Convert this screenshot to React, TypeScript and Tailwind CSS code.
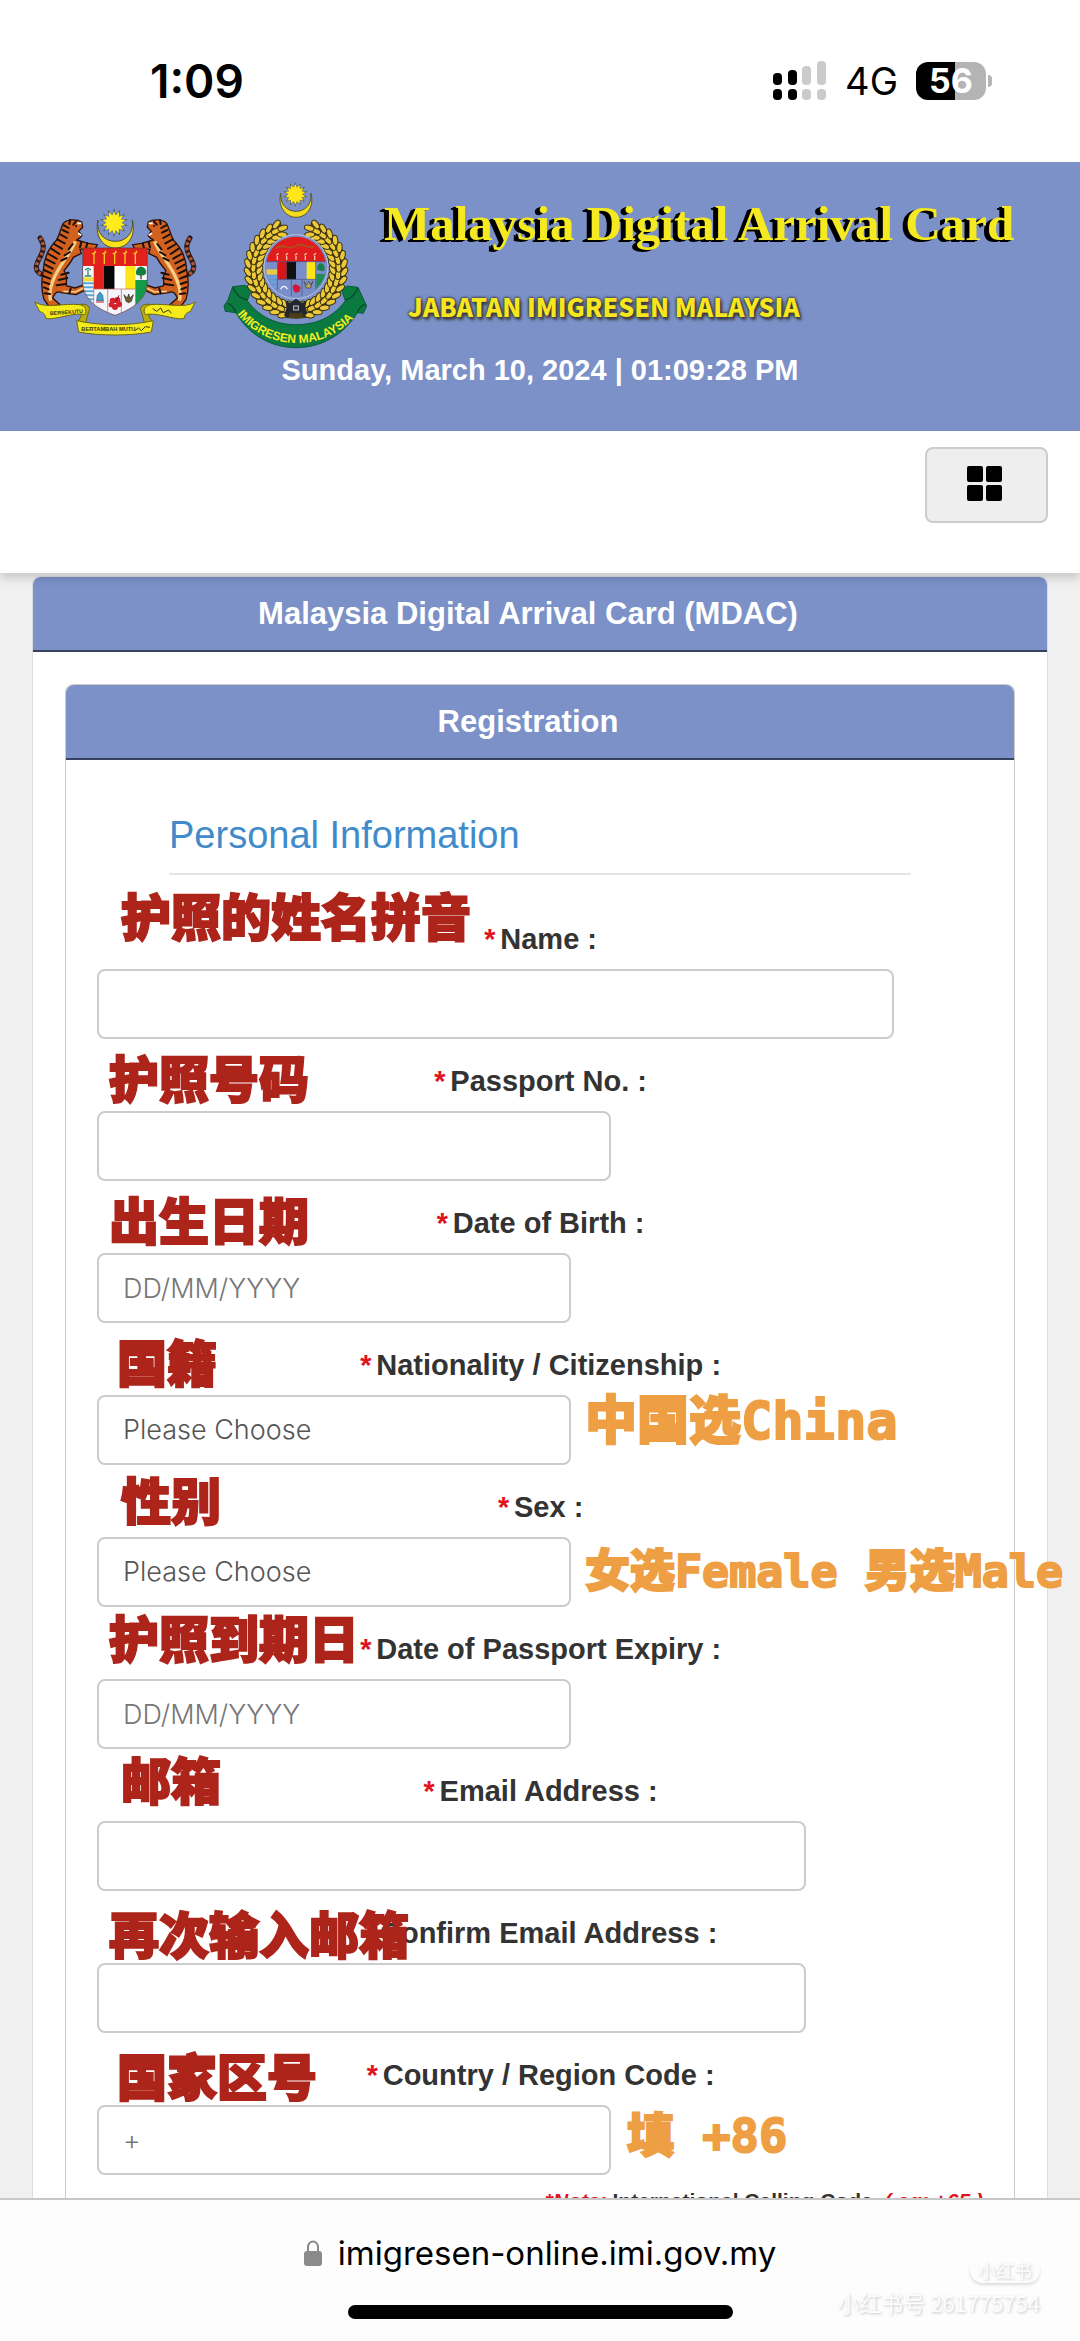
import React from 'react';

const SANS = "font-['Liberation_Sans',Arial,sans-serif]";

type Field = {
  id: string;
  label: string;
  width: string;
  kind: 'input' | 'select';
  placeholder?: string;
  note: string;
  notePos: string;
  hint?: string;
  hintPos?: string;
};

const fields: Field[] = [
  { id: 'name', label: 'Name :', width: 'w-[90%]', kind: 'input', note: '护照的姓名拼音', notePos: 'left-6 -top-2' },
  { id: 'passport', label: 'Passport No. :', width: 'w-[58%]', kind: 'input', note: '护照号码', notePos: 'left-3 top-3' },
  { id: 'dob', label: 'Date of Birth :', width: 'w-[474px]', kind: 'input', placeholder: 'DD/MM/YYYY', note: '出生日期', notePos: 'left-3 top-3' },
  { id: 'nationality', label: 'Nationality / Citizenship :', width: 'w-[474px]', kind: 'select', placeholder: 'Please Choose', note: '国籍', notePos: 'left-5 top-3', hint: '中国选China', hintPos: 'left-[488px] top-[73px] text-[52px]' },
  { id: 'sex', label: 'Sex :', width: 'w-[474px]', kind: 'select', placeholder: 'Please Choose', note: '性别', notePos: 'left-6 top-2', hint: '女选Female 男选Male', hintPos: 'left-[488px] top-[82px] text-[45px]' },
  { id: 'expiry', label: 'Date of Passport Expiry :', width: 'w-[474px]', kind: 'input', placeholder: 'DD/MM/YYYY', note: '护照到期日', notePos: 'left-3 top-1' },
  { id: 'email', label: 'Email Address :', width: 'w-[80%]', kind: 'input', note: '邮箱', notePos: 'left-6 top-1' },
  { id: 'confirm', label: 'Confirm Email Address :', width: 'w-[80%]', kind: 'input', note: '再次输入邮箱', notePos: 'left-3 top-4' },
  { id: 'country', label: 'Country / Region Code :', width: 'w-[58%]', kind: 'input', placeholder: '+', note: '国家区号', notePos: 'left-5 top-4', hint: '填 +86', hintPos: 'left-[530px] top-[78px] text-[47px]' },
];

function starPoints(cx: number, cy: number, outer: number, inner: number, n: number) {
  const pts: string[] = [];
  for (let i = 0; i < n * 2; i++) {
    const r = i % 2 === 0 ? outer : inner;
    const a = (Math.PI * i) / n - Math.PI / 2;
    pts.push(`${(cx + r * Math.cos(a)).toFixed(1)},${(cy + r * Math.sin(a)).toFixed(1)}`);
  }
  return pts.join(' ');
}

function Tiger() {
  return (
    <g>
      <path d="M62 312 C40 300 50 280 60 262 C72 240 74 225 60 204" fill="none" stroke="#2a1a16" strokeWidth="15" strokeLinecap="round" />
      <path d="M62 312 C40 300 50 280 60 262 C72 240 74 225 60 204" fill="none" stroke="#b4573a" strokeWidth="10" strokeDasharray="9 7" />
      <path
        d="M130 160 C140 148 170 146 185 156 L188 172 L176 184 L186 196 C182 206 172 206 170 210 L205 220 L232 224 L226 236 L180 238 L184 250 L160 262 C152 278 142 290 132 302 C148 320 134 338 140 348 L165 354 L194 344 L196 360 L168 374 L124 368 C112 362 106 366 98 384 L120 404 L88 410 L72 388 C60 350 66 320 70 300 C72 260 90 230 110 210 C118 195 122 175 130 160Z"
        fill="#d2601f"
        stroke="#2a1209"
        strokeWidth="4"
      />
      <path d="M166 214 C152 250 122 280 104 320 C92 345 86 370 92 392" fill="none" stroke="#f6cf85" strokeWidth="10" />
      <path d="M130 364 L166 366 L190 354" fill="none" stroke="#f6cf85" strokeWidth="5" />
      <g fill="none" stroke="#1b0e0a" strokeWidth="6" strokeLinecap="round">
        <path d="M132 166 L146 174 M128 180 L144 188 M122 194 L140 204 M112 208 L134 220 M102 222 L126 236 M94 236 L118 252 M86 252 L110 266 M80 268 L104 280 M76 284 L98 296 M72 300 L94 310 M70 318 L90 326 M70 336 L88 342 M72 352 L86 358 M74 370 L90 372" />
        <path d="M158 222 L146 238 M150 246 L134 256 M140 264 L124 272 M146 308 L124 314 M142 324 L116 330 M138 342 L110 346 M184 216 L180 232 M202 220 L198 234 M152 356 L148 370 M168 154 L160 164 M150 150 L148 162" />
      </g>
      <path d="M172 160 L184 160 M174 190 L184 196" stroke="#fff" strokeWidth="5" />
      <circle cx="168" cy="168" r="3" fill="#111" />
    </g>
  );
}

function CoatOfArms() {
  return (
    <svg viewBox="0 0 570 540" className="h-[180px] w-[190px] shrink-0" role="img" aria-label="Coat of arms of Malaysia">
      <defs>
        <clipPath id="arms-shield">
          <path d="M188 234 H382 V335 C382 392 330 420 285 436 C240 420 188 392 188 335Z" />
        </clipPath>
      </defs>
      <polygon points={starPoints(282, 158, 43, 24, 14)} fill="#3c4a5c" />
      <polygon points={starPoints(282, 158, 36, 23, 14)} fill="#ffec1a" />
      <path d="M234 150 C222 205 255 234 286 234 C318 234 350 205 337 150 C342 190 318 214 286 214 C254 214 228 190 234 150Z" fill="#fbe01c" stroke="#4c5230" strokeWidth="3" />
      <Tiger />
      <g transform="translate(570 0) scale(-1 1)">
        <Tiger />
      </g>
      <g clipPath="url(#arms-shield)">
        <rect x="188" y="234" width="194" height="210" fill="#f4f6fb" />
        <rect x="188" y="234" width="194" height="54" fill="#e3211c" />
        {[222, 253, 284, 315, 346].map((x) => (
          <path key={x} d={`M${x} 282 V254 M${x - 6} 252 L${x + 6} 246 M${x} 254 L${x + 4} 242`} stroke="#f7c81e" strokeWidth="4" fill="none" />
        ))}
        <rect x="188" y="322" width="33" height="12" fill="#f3df3a" />
        <path d="M188 340 H221 M188 352 H221 M188 364 H221 M188 376 H221 M188 388 H221" stroke="#58a7d8" strokeWidth="6" />
        <path d="M204 316 V300 M195 300 L204 295 L213 300 M194 318 H214" stroke="#2e8a78" strokeWidth="4" fill="none" />
        <rect x="221" y="288" width="30" height="69" fill="#e3211c" />
        <rect x="251" y="288" width="33" height="69" fill="#060606" />
        <rect x="284" y="288" width="32" height="69" fill="#fff" />
        <rect x="316" y="288" width="30" height="69" fill="#ffe617" />
        <path d="M346 330 H382 V440 H346Z" fill="#149a48" />
        <path d="M363 328 V310" stroke="#5a3a1a" strokeWidth="4" />
        <path d="M348 312 C346 300 356 288 364 290 C374 290 382 302 377 312 C370 318 354 318 348 312Z" fill="#12803e" />
        <path d="M221 357 V412 M263 357 V430 M304 357 V430 M221 357 H346" stroke="#b55a62" strokeWidth="2" />
        <path d="M232 376 L240 366 L248 376 L250 392 H230Z" fill="#3f9fc9" stroke="#265b7a" strokeWidth="2" />
        <path d="M228 396 H252" stroke="#c23" strokeWidth="3" />
        <g fill="#d8202e">
          <circle cx="278" cy="392" r="9" />
          <circle cx="292" cy="390" r="9" />
          <circle cx="297" cy="403" r="9" />
          <circle cx="285" cy="411" r="9" />
          <circle cx="274" cy="404" r="8" />
        </g>
        <path d="M286 398 L297 376" stroke="#7b1620" strokeWidth="3" />
        <path d="M312 374 L322 384 L326 372 L330 384 L340 374 L334 394 L326 398 L318 394Z" fill="#6b6136" stroke="#2b2a1b" strokeWidth="2" />
      </g>
      <path d="M188 234 H382 V335 C382 392 330 420 285 436 C240 420 188 392 188 335Z" fill="none" stroke="#62332f" strokeWidth="2" />
      <g fill="#f5ea1b" stroke="#6d6a12" strokeWidth="3" strokeLinejoin="round">
        <path d="M178 404 C200 398 214 412 206 424 L196 462 L172 456 C186 440 190 424 178 404Z" fill="#b9ad10" />
        <path d="M392 404 C370 398 356 412 364 424 L374 462 L398 456 C384 440 380 424 392 404Z" fill="#b9ad10" />
        <path d="M44 396 C80 418 130 398 180 404 C196 408 202 420 194 434 C160 426 110 450 78 446 C76 432 66 424 60 426 Z" />
        <path d="M526 396 C490 418 440 398 390 404 C374 408 368 420 376 434 C410 426 460 450 492 446 C494 432 504 424 510 426 Z" />
        <path d="M170 452 C240 468 330 468 400 452 L394 486 C330 498 240 498 176 486Z" />
      </g>
      <g fill="#3a3608" fontFamily="'Liberation Sans',sans-serif" fontWeight="700">
        <text x="90" y="436" fontSize="16" transform="rotate(-4 90 436)">BERSEKUTU</text>
        <text x="184" y="484" fontSize="17">BERTAMBAH MUTU</text>
      </g>
      <path d="M398 416 L410 424 L422 414 L430 428 L446 420 L454 430" stroke="#3a3608" strokeWidth="3" fill="none" />
      <path d="M344 482 L356 474 L364 482 L376 470 L390 472" stroke="#3a3608" strokeWidth="3" fill="none" />
    </svg>
  );
}

function WreathSide() {
  const grains: React.ReactNode[] = [];
  [110, 128, 145].forEach((r, ri) => {
    for (let deg = 98 + ri * 4; deg <= 252; deg += 10) {
      const a = (deg * Math.PI) / 180;
      const x = (258 + r * Math.cos(a)).toFixed(1);
      const y = (296 + r * Math.sin(a)).toFixed(1);
      const tilt = deg + 90 + (ri - 1) * -28;
      grains.push(
        <ellipse key={`${r}-${deg}`} cx={x} cy={y} rx="15" ry="8" transform={`rotate(${tilt} ${x} ${y})`} fill="#ecc93a" stroke="#3b3210" strokeWidth="3" />,
      );
    }
  });
  return (
    <g>
      <path d="M258 424 A128 128 0 0 1 218 174" fill="none" stroke="#4a3f14" strokeWidth="44" />
      {grains}
    </g>
  );
}

function ImmigrationCrest() {
  return (
    <svg viewBox="0 0 510 540" className="h-[180px] w-[170px] shrink-0" role="img" aria-label="Imigresen Malaysia">
      <defs>
        <clipPath id="crest-disc">
          <circle cx="258" cy="290" r="90" />
        </clipPath>
        <path id="crest-arc" d="M82 432 A228 228 0 0 0 444 428" />
      </defs>
      <polygon points={starPoints(256, 73, 37, 22, 14)} fill="#57522c" />
      <polygon points={starPoints(256, 73, 31, 21, 14)} fill="#ffe51a" />
      <path d="M212 70 C202 116 232 142 258 142 C286 142 314 116 303 70 C306 104 284 124 258 124 C232 124 210 104 212 70Z" fill="#f5da22" stroke="#5a5424" strokeWidth="3" />
      <WreathSide />
      <g transform="translate(516 0) scale(-1 1)">
        <WreathSide />
      </g>
      <circle cx="258" cy="290" r="96" fill="#7a8fc9" stroke="#b9c4e4" strokeWidth="3" />
      <g clipPath="url(#crest-disc)">
        <rect x="160" y="190" width="196" height="85" fill="#e01c1c" />
        <path d="M196 236 C220 216 240 244 258 228 C276 214 290 238 312 230" stroke="#a8541c" strokeWidth="5" fill="none" />
        {[202, 230, 258, 286, 314].map((x) => (
          <path key={x} d={`M${x} 270 V258 M${x - 3} 256 L${x + 4} 250`} stroke="#f2c7a0" strokeWidth="4" />
        ))}
        <rect x="166" y="298" width="36" height="16" fill="#e8c94a" />
        <path d="M166 322 H202 M166 336 H202 M170 350 H202" stroke="#5fa8e0" strokeWidth="7" />
        <rect x="202" y="275" width="28" height="53" fill="#d8151b" />
        <rect x="230" y="275" width="28" height="53" fill="#111" />
        <rect x="290" y="275" width="27" height="53" fill="#ffe51a" />
        <path d="M319 312 H350 V380 H319Z" fill="#1d9050" />
        <path d="M322 300 C320 284 328 278 334 280 C344 282 346 296 342 304Z" fill="#1b7f4a" />
        <path d="M166 275 H350 M202 328 H319 M202 328 V370 M244 328 V380 M276 328 V380 M317 275 V360" stroke="#43507c" strokeWidth="2" />
        <path d="M212 358 C216 346 228 346 232 358" stroke="#eef" strokeWidth="4" fill="none" />
        <path d="M248 348 L256 342 L264 346 L272 352 L268 366 L256 368 L250 360Z" fill="#d3163a" />
        <path d="M282 334 L290 346 L296 334 L302 346 L308 334 L302 354 H288Z" fill="#b9ac62" stroke="#3a3a3a" strokeWidth="2" />
      </g>
      <path
        d="M68 350 L106 346 L122 364 L112 392 C150 446 206 464 258 464 C312 464 368 446 406 392 L396 364 L410 348 L444 352 L470 408 L460 430 L442 428 C402 496 330 533 258 533 C186 533 116 496 78 428 L46 424 L42 408 L54 390Z"
        fill="#0b7a3f"
        stroke="#0a5b3c"
        strokeWidth="3"
      />
      <path d="M68 352 C80 378 96 388 112 390 M78 428 C70 410 62 402 54 400 M444 354 C432 378 420 388 406 390 M442 428 C450 410 456 404 466 404" stroke="#064a2f" strokeWidth="4" fill="none" />
      <g fill="#23262e">
        <path d="M226 392 L240 398 L258 386 L276 398 L290 392 L286 410 L292 430 L282 440 L276 428 H240 L234 444 L222 436 L230 414Z" />
        <rect x="244" y="398" width="28" height="32" rx="4" />
      </g>
      <rect x="251" y="408" width="14" height="12" fill="none" stroke="#c9cede" strokeWidth="3" />
      <text fill="#f6ec1f" fontFamily="'Liberation Sans',sans-serif" fontWeight="700" fontSize="36">
        <textPath href="#crest-arc">IMIGRESEN MALAYSIA</textPath>
      </text>
    </svg>
  );
}

function StatusBar() {
  return (
    <div className="flex h-[162px] shrink-0 items-center justify-between bg-white pr-[88px] pl-[150px] font-['Inter',sans-serif] text-black">
      <span className="text-[46px] leading-none font-semibold">1:09</span>
      <div className="flex items-center gap-[18px]">
        <svg viewBox="0 0 54 40" className="h-10 w-[54px]" aria-label="Signal">
          <g fill="#000">
            <rect x="0" y="12" width="9" height="12" rx="4" />
            <rect x="15" y="9" width="9" height="15" rx="4" />
            <rect x="0" y="28" width="9" height="11" rx="4" />
            <rect x="15" y="28" width="9" height="11" rx="4" />
          </g>
          <g fill="#cbcbcb">
            <rect x="29" y="5" width="9" height="19" rx="4" />
            <rect x="44" y="0" width="9" height="24" rx="4" />
            <rect x="29" y="28" width="9" height="11" rx="4" />
            <rect x="44" y="28" width="9" height="11" rx="4" />
          </g>
        </svg>
        <span className="text-[38px] leading-none">4G</span>
        <div className="flex items-center gap-[2px]">
          <div className="flex h-[38px] w-[70px] items-center justify-center rounded-xl bg-linear-to-r from-black from-56% to-[#b4b4b4] to-56%">
            <span className="text-[34px] leading-none font-bold text-white">56</span>
          </div>
          <div className="h-3 w-1 rounded-r-full bg-[#b4b4b4]" />
        </div>
      </div>
    </div>
  );
}

function FieldRow({ f }: { f: Field }) {
  const box = `${f.width} block h-[70px] max-w-full rounded-lg border-2 border-[#ccc] bg-white px-6 font-['Inter',sans-serif] text-[27px] font-light text-[#555] placeholder:text-[#777]`;
  return (
    <div className="relative">
      <div className="flex h-[72px] items-center justify-center pt-3">
        <label htmlFor={f.id} className="text-[29px] leading-8 font-bold whitespace-nowrap text-[#333]">
          <span className="mr-[6px] text-[#e0141c] italic">*</span>
          {f.label}
        </label>
      </div>
      {f.kind === 'select' ? (
        <select id={f.id} className={`${box} appearance-none`}>
          <option>{f.placeholder}</option>
        </select>
      ) : (
        <input id={f.id} type="text" placeholder={f.placeholder} className={box} />
      )}
      <span className={`${f.notePos} absolute font-['Noto_Sans_CJK_SC',sans-serif] text-[50px] leading-[50px] font-black whitespace-nowrap text-[#ad241b] [-webkit-text-stroke:2px_#ad241b]`}>
        {f.note}
      </span>
      {f.hint && (
        <span className={`${f.hintPos} absolute font-['DejaVu_Sans_Mono','Noto_Sans_CJK_SC',monospace] leading-[50px] font-black whitespace-nowrap text-[#ee9f43] [-webkit-text-stroke:2px_#ee9f43]`}>
          {f.hint}
        </span>
      )}
    </div>
  );
}

export default function App() {
  return (
    <div className={`${SANS} flex h-screen flex-col overflow-hidden bg-[#f0f0f0]`}>
      <StatusBar />

      <header className="h-[269px] shrink-0 bg-[#7b91c8] pt-2">
        <div className="flex pl-5">
          <CoatOfArms />
          <ImmigrationCrest />
          <div className="whitespace-nowrap">
            <h1 className="pt-6 pl-1 font-['Liberation_Serif',serif] text-[49px] leading-[60px] font-bold text-[#f5e921] [text-shadow:-5px_2px_0_#000,-3px_1px_0_#000]">
              Malaysia Digital Arrival Card
            </h1>
            <p className="pt-6 pl-7 font-['Noto_Sans_CJK_SC',sans-serif] text-[25px] leading-[56px] font-black text-[#f7e51d] [text-shadow:0_0_3px_#333,0_0_3px_#333,2px_3px_3px_#444]">
              JABATAN IMIGRESEN MALAYSIA
            </p>
          </div>
        </div>
        <p className="text-center text-[29px] leading-10 font-bold text-white">Sunday, March 10, 2024 | 01:09:28 PM</p>
      </header>

      <nav className="relative z-10 flex h-[142px] shrink-0 items-start justify-end bg-white pt-4 pr-8 shadow-[0_6px_8px_rgba(0,0,0,0.15)]">
        <button type="button" aria-label="Menu" className="flex h-[76px] w-[123px] items-center justify-center rounded-lg border-2 border-[#ccc] bg-[#eee] pr-1 pb-1">
          <svg viewBox="0 0 35 35" className="size-[35px]">
            <rect x="0" y="0" width="16" height="16" rx="2" />
            <rect x="19" y="0" width="16" height="16" rx="2" />
            <rect x="0" y="19" width="16" height="16" rx="2" />
            <rect x="19" y="19" width="16" height="16" rx="2" />
          </svg>
        </button>
      </nav>

      <main className="min-h-0 flex-1 overflow-hidden px-8 pt-[3px]">
        <section className="rounded-t-lg border border-[#ddd] bg-white">
          <h2 className="rounded-t-lg border-b-2 border-[#36425f] bg-[#7b91c8] pr-6 text-center text-[31px] leading-[73px] font-bold text-white">
            Malaysia Digital Arrival Card (MDAC)
          </h2>
          <div className="px-8 pt-8">
            <section className="rounded-t-lg border border-[#ccc]">
              <h3 className="rounded-t-lg border-b-2 border-[#36425f] bg-[#7b91c8] pr-6 text-center text-[31px] leading-[73px] font-bold text-white">
                Registration
              </h3>
              <form className="px-[31px]">
                <h4 className="mx-[72px] mb-[22px] border-b-2 border-[#e5e5e5] pt-12 pb-[11px] text-[38px] leading-[54px] text-[#428bca]">
                  Personal Information
                </h4>
                {fields.map((f) => (
                  <FieldRow key={f.id} f={f} />
                ))}
                <p className="pt-[10px] text-right text-[21px] leading-8 font-bold whitespace-nowrap text-[#333]">
                  <span className="text-[#e0141c] italic">*Note:</span> International Calling Code&nbsp;{' '}
                  <span className="text-[#e0141c] italic">( eg: +65 )</span>
                </p>
              </form>
            </section>
          </div>
        </section>
      </main>

      <footer className="relative h-[143px] shrink-0 border-t-2 border-[#c8c8c8] bg-[#fdfdfd] font-['Inter',sans-serif]">
        <div className="flex items-center justify-center gap-4 pt-8">
          <svg viewBox="0 0 18 26" className="h-[26px] w-[18px]" aria-hidden="true">
            <path d="M4 12 V7 a5 5.500 0 0 1 10 0 V12" fill="none" stroke="#8a8a8a" strokeWidth="2" />
            <rect x="0" y="11" width="18" height="15" rx="3" fill="#8a8a8a" />
          </svg>
          <a href="#top" className="text-[33px] leading-[42px] text-black">
            imigresen-online.imi.gov.my
          </a>
        </div>
        <div className="mx-auto mt-[31px] h-[14px] w-[385px] rounded-full bg-black" />
        <div className="absolute right-10 bottom-6 flex flex-col items-end gap-1 font-['Noto_Sans_CJK_SC',sans-serif] text-[#fdfdfd] [text-shadow:1px_1px_3px_#c4c4c4]">
          <span className="rounded-full px-2 text-[18px] leading-[26px] shadow-[0_2px_3px_#ddd]">小红书</span>
          <span className="text-[22px] leading-[30px]">小红书号 261775754</span>
        </div>
      </footer>
    </div>
  );
}
